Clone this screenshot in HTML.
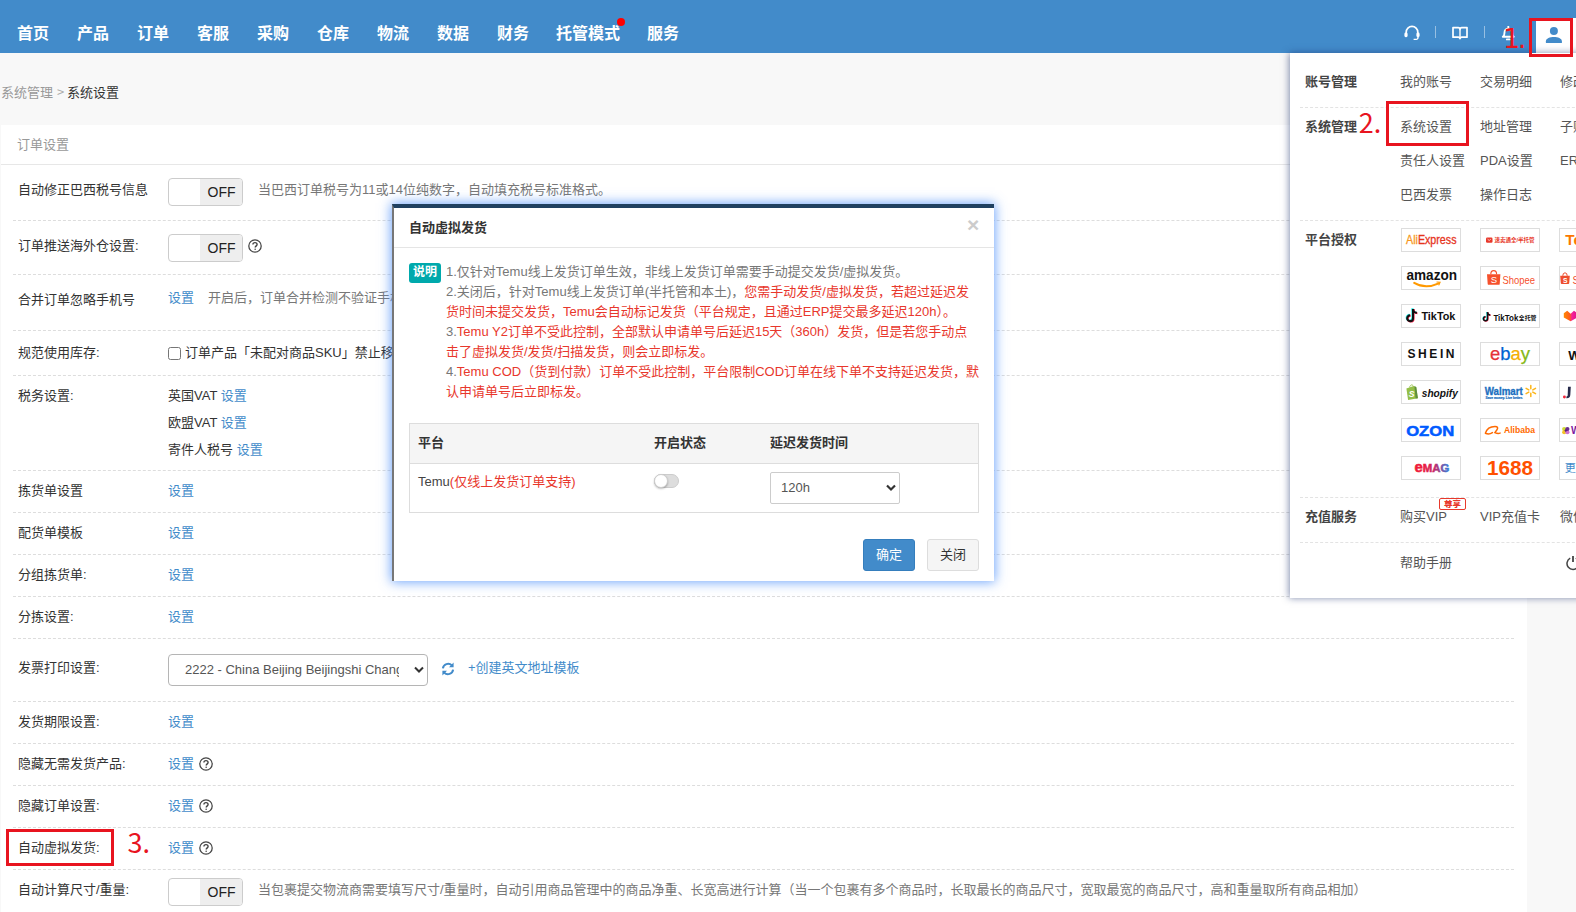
<!DOCTYPE html>
<html lang="zh-CN">
<head>
<meta charset="utf-8">
<title>系统设置</title>
<style>
*{box-sizing:border-box;margin:0;padding:0}
html,body{width:1576px;height:912px;overflow:hidden}
body{position:relative;background:#f8f8f8;font-family:"Liberation Sans","Noto Sans CJK SC",sans-serif;font-size:13px;color:#333}
.t{position:absolute;white-space:nowrap;line-height:20px;height:20px}
a{color:#428bca;text-decoration:none}
/* nav */
#nav{position:absolute;left:0;top:0;width:1576px;height:53px;background:#428bca}
#nav .m{position:absolute;top:22px;line-height:24px;height:24px;font-size:16px;font-weight:bold;color:#fff;white-space:nowrap}
/* panel */
#panel{position:absolute;left:1px;top:125px;width:1526px;height:800px;background:#fff}
#panel .hd{position:absolute;left:0;top:0;width:1525px;height:40px;border-bottom:1px solid #e7e7e7}
.sep{position:absolute;left:13px;width:1501px;height:0;border-top:1px dashed #ddd}
.lab{color:#333}
.gray{color:#777}
.tog{position:absolute;left:168px;width:75px;height:28px;border:1px solid #ccc;border-radius:4px;background:#fff;overflow:hidden}
.tog i{position:absolute;left:31px;top:0;width:43px;height:26px;background:#eee;font-style:normal;font-size:14px;line-height:27px;text-align:center;color:#222}
.q{position:absolute;width:14px;height:14px}


.rb{position:absolute;border:3px solid #e8141f}
.num{position:absolute;color:#e8141f;font-family:"Noto Sans CJK SC","Liberation Sans",sans-serif;font-size:27px;line-height:30px;height:30px;white-space:nowrap}
/* dropdown */
#dd{position:absolute;left:1290px;top:53px;width:300px;height:545px;background:#fff;box-shadow:-1px 0 7px rgba(30,50,110,.55)}
#dd .t{color:#555}
#dd .b{font-weight:bold;color:#444}
#dd .ds{position:absolute;left:10px;width:290px;height:0;border-top:1px dashed #e3e3e3}
.lg{position:absolute;width:60px;height:24px;border:1px solid #ddd;background:#fff;overflow:hidden}
.lg svg{position:absolute;left:-1px;top:-1px;width:60px;height:24px;overflow:visible}
.lg text{font-family:"Liberation Sans","Noto Sans CJK SC",sans-serif}
/* modal */
#modal{position:absolute;left:392px;top:204px;width:602px;height:377px;background:#fff;border-left:2px solid #777;border-top:4px solid #1f4060;box-shadow:0 0 11px 1px rgba(70,140,250,.78)}
#modal .t{color:#777}
#modal .r{color:#e8372c}
#modal .th{font-weight:bold;color:#333}
.btn{position:absolute;top:335px;width:52px;height:32px;border-radius:3px;font-size:13px;line-height:30px;text-align:center}

</style>
</head>
<body>
<!-- NAV -->
<div id="nav">
  <span class="m" style="left:17px">首页</span>
  <span class="m" style="left:77px">产品</span>
  <span class="m" style="left:137px">订单</span>
  <span class="m" style="left:197px">客服</span>
  <span class="m" style="left:257px">采购</span>
  <span class="m" style="left:317px">仓库</span>
  <span class="m" style="left:377px">物流</span>
  <span class="m" style="left:437px">数据</span>
  <span class="m" style="left:497px">财务</span>
  <span class="m" style="left:556px">托管模式</span>
  <span style="position:absolute;left:617px;top:18px;width:8px;height:8px;border-radius:50%;background:#f00"></span>
  <span class="m" style="left:647px">服务</span>

  <svg style="position:absolute;left:1403px;top:25px" width="18" height="16" viewBox="0 0 18 16"><path d="M3.2 9V7.2a5.8 5.8 0 0 1 11.6 0V9" fill="none" stroke="#fff" stroke-width="1.7"/><rect x="1.4" y="7.6" width="3.2" height="4.6" rx="1.4" fill="#fff"/><rect x="13.4" y="7.6" width="3.2" height="4.6" rx="1.4" fill="#fff"/><path d="M15 12v.6a1.8 1.8 0 0 1-1.8 1.8H10.6" fill="none" stroke="#fff" stroke-width="1.4"/></svg>
  <span style="position:absolute;left:1435px;top:26px;width:1px;height:12px;background:rgba(255,255,255,.45)"></span>
  <svg style="position:absolute;left:1452px;top:26px" width="16" height="15" viewBox="0 0 16 15"><path d="M1 1.6h5.2a1.8 1.8 0 0 1 1.8 1.8 1.8 1.8 0 0 1 1.8-1.8H15v9.6H9.8a1.8 1.8 0 0 0-1.8 1.4 1.8 1.8 0 0 0-1.8-1.4H1z" fill="none" stroke="#fff" stroke-width="1.7" stroke-linejoin="round"/><path d="M8 3.4v8.4" stroke="#fff" stroke-width="1.4"/></svg>
  <span style="position:absolute;left:1484px;top:26px;width:1px;height:12px;background:rgba(255,255,255,.45)"></span>
  <svg style="position:absolute;left:1501px;top:26px" width="15" height="16" viewBox="0 0 15 16"><path d="M1.8 10.8c1.5-1 1.7-2.2 1.7-4.4a3.8 3.8 0 0 1 7.6 0c0 2.2.2 3.4 1.7 4.400z" fill="none" stroke="#fff" stroke-width="1.9" stroke-linejoin="round"/><path d="M7.3 .6v1.4" stroke="#fff" stroke-width="1.8" stroke-linecap="round"/><path d="M5.8 13.4h3" stroke="#fff" stroke-width="1.7" stroke-linecap="round"/></svg>
  <div style="position:absolute;left:1536px;top:18px;width:40px;height:35px;background:#fff"></div>
  <svg style="position:absolute;left:1545px;top:25px" width="18" height="19" viewBox="0 0 18 19"><circle cx="8.9" cy="6" r="4" fill="#428bca"/><path d="M.9 17.9v-1.7C.9 13.4 5 12 8.9 12s8 1.4 8 4.2v1.7z" fill="#428bca"/></svg>
</div>

<!-- BREADCRUMB -->
<div class="t" style="left:1px;top:82px"><span style="color:#999">系统管理</span><span style="color:#aaa;font-family:'Noto Sans CJK SC',sans-serif;margin-left:1px"> &gt; </span><span>系统设置</span></div>

<!-- PANEL -->
<div id="panel">
  <div class="hd"><span class="t" style="left:16px;top:10px;color:#999">订单设置</span></div>
</div>

<!-- PANEL CONTENT (page coords) -->
<div id="rows">
<span class="t lab" style="left:18px;top:180px">自动修正巴西税号信息</span>
<div class="tog" style="top:178px"><i>OFF</i></div>
<span class="t gray" style="left:258px;top:180px">当巴西订单税号为11或14位纯数字，自动填充税号标准格式。</span>
<div class="sep" style="top:220px"></div>
<span class="t lab" style="left:18px;top:236px">订单推送海外仓设置:</span>
<div class="tog" style="top:234px"><i>OFF</i></div>
<svg class="q" style="left:248px;top:239px" viewBox="0 0 14 14"><circle cx="7" cy="7" r="6.2" fill="none" stroke="#444" stroke-width="1.25"/><path d="M4.9 5.6c0-1.2.9-2 2.1-2s2.1.8 2.1 1.9c0 1.3-1.9 1.5-1.9 3.1" fill="none" stroke="#444" stroke-width="1.35"/><circle cx="7.15" cy="10.3" r=".8" fill="#444"/></svg>
<div class="sep" style="top:274px"></div>
<span class="t lab" style="left:18px;top:290px">合并订单忽略手机号</span>
<span class="t " style="left:168px;top:288px"><a>设置</a></span>
<span class="t gray" style="left:208px;top:288px">开启后，订单合并检测不验证手机号</span>
<div class="sep" style="top:330px"></div>
<span class="t lab" style="left:18px;top:343px">规范使用库存:</span>
<span style="position:absolute;left:168px;top:347px;width:13px;height:13px;border:1px solid #767676;border-radius:2.5px;background:#fff"></span>
<span class="t " style="left:185px;top:343px">订单产品「未配对商品SKU」禁止移入待处理</span>
<div class="sep" style="top:375px"></div>
<span class="t lab" style="left:18px;top:386px">税务设置:</span>
<span class="t " style="left:168px;top:386px">英国VAT <a>设置</a></span>
<span class="t " style="left:168px;top:413px">欧盟VAT <a>设置</a></span>
<span class="t " style="left:168px;top:440px">寄件人税号 <a>设置</a></span>
<div class="sep" style="top:470px"></div>
<span class="t lab" style="left:18px;top:481px">拣货单设置</span>
<span class="t " style="left:168px;top:481px"><a>设置</a></span>
<div class="sep" style="top:512px"></div>
<span class="t lab" style="left:18px;top:523px">配货单模板</span>
<span class="t " style="left:168px;top:523px"><a>设置</a></span>
<div class="sep" style="top:554px"></div>
<span class="t lab" style="left:18px;top:565px">分组拣货单:</span>
<span class="t " style="left:168px;top:565px"><a>设置</a></span>
<div class="sep" style="top:596px"></div>
<span class="t lab" style="left:18px;top:607px">分拣设置:</span>
<span class="t " style="left:168px;top:607px"><a>设置</a></span>
<div class="sep" style="top:638px"></div>
<span class="t lab" style="left:18px;top:658px">发票打印设置:</span>
<div style="position:absolute;left:168px;top:654px;width:260px;height:32px;border:1px solid #b5b5b5;border-radius:4px;background:#fff;overflow:hidden"><span class="t" style="left:16px;top:5px;font-size:13px;color:#555;width:214px;overflow:hidden">2222 - China Beijing Beijingshi Changping</span><svg style="position:absolute;right:2px;top:10px" width="12" height="10" viewBox="0 0 12 10"><path d="M2 2.5l4 4 4-4" fill="none" stroke="#333" stroke-width="2"/></svg></div>
<svg style="position:absolute;left:441px;top:662px" width="14" height="14" viewBox="0 0 14 14"><path d="M1.9 6.4A5.2 5.2 0 0 1 10.8 3.4M12.1 7.6A5.2 5.2 0 0 1 3.2 10.6" fill="none" stroke="#428bca" stroke-width="2"/><path d="M12.6 .6v4.6H8zM1.4 13.4V8.8H6z" fill="#428bca"/></svg>
<span class="t " style="left:468px;top:658px"><a>+创建英文地址模板</a></span>
<div class="sep" style="top:701px"></div>
<span class="t lab" style="left:18px;top:712px">发货期限设置:</span>
<span class="t " style="left:168px;top:712px"><a>设置</a></span>
<div class="sep" style="top:743px"></div>
<span class="t lab" style="left:18px;top:754px">隐藏无需发货产品:</span>
<span class="t " style="left:168px;top:754px"><a>设置</a></span>
<svg class="q" style="left:199px;top:757px" viewBox="0 0 14 14"><circle cx="7" cy="7" r="6.2" fill="none" stroke="#444" stroke-width="1.25"/><path d="M4.9 5.6c0-1.2.9-2 2.1-2s2.1.8 2.1 1.9c0 1.3-1.9 1.5-1.9 3.1" fill="none" stroke="#444" stroke-width="1.35"/><circle cx="7.15" cy="10.3" r=".8" fill="#444"/></svg>
<div class="sep" style="top:785px"></div>
<span class="t lab" style="left:18px;top:796px">隐藏订单设置:</span>
<span class="t " style="left:168px;top:796px"><a>设置</a></span>
<svg class="q" style="left:199px;top:799px" viewBox="0 0 14 14"><circle cx="7" cy="7" r="6.2" fill="none" stroke="#444" stroke-width="1.25"/><path d="M4.9 5.6c0-1.2.9-2 2.1-2s2.1.8 2.1 1.9c0 1.3-1.9 1.5-1.9 3.1" fill="none" stroke="#444" stroke-width="1.35"/><circle cx="7.15" cy="10.3" r=".8" fill="#444"/></svg>
<div class="sep" style="top:827px"></div>
<span class="t lab" style="left:18px;top:838px">自动虚拟发货:</span>
<span class="t " style="left:168px;top:838px"><a>设置</a></span>
<svg class="q" style="left:199px;top:841px" viewBox="0 0 14 14"><circle cx="7" cy="7" r="6.2" fill="none" stroke="#444" stroke-width="1.25"/><path d="M4.9 5.6c0-1.2.9-2 2.1-2s2.1.8 2.1 1.9c0 1.3-1.9 1.5-1.9 3.1" fill="none" stroke="#444" stroke-width="1.35"/><circle cx="7.15" cy="10.3" r=".8" fill="#444"/></svg>
<div class="sep" style="top:869px"></div>
<span class="t lab" style="left:18px;top:880px">自动计算尺寸/重量:</span>
<div class="tog" style="top:878px"><i>OFF</i></div>
<span class="t gray" style="left:258px;top:880px">当包裹提交物流商需要填写尺寸/重量时，自动引用商品管理中的商品净重、长宽高进行计算（当一个包裹有多个商品时，长取最长的商品尺寸，宽取最宽的商品尺寸，高和重量取所有商品相加）</span>
</div>

<!-- MODAL -->
<div id="modal">
<span class="t" style="left:15px;top:10px;font-weight:bold;color:#333">自动虚拟发货</span>
<span class="t" style="left:573px;top:7px;font-size:21px;font-weight:bold;color:#ccc;font-family:'Liberation Sans',sans-serif">×</span>
<div style="position:absolute;left:0;top:39px;width:600px;height:1px;background:#e5e5e5"></div>
<span style="position:absolute;left:15px;top:55px;width:32px;height:20px;border-radius:3px;background:#00a9ac;color:#fff;font-size:12px;font-weight:bold;line-height:19px;text-align:center">说明</span>
<span class="t" style="left:52px;top:54px">1.仅针对Temu线上发货订单生效，非线上发货订单需要手动提交发货/虚拟发货。</span>
<span class="t" style="left:52px;top:74px">2.关闭后，针对Temu线上发货订单(半托管和本土)，<span class="r">您需手动发货/虚拟发货，若超过延迟发</span></span>
<span class="t" style="left:52px;top:94px"><span class="r">货时间未提交发货，Temu会自动标记发货（平台规定，且通过ERP提交最多延迟120h）。</span></span>
<span class="t" style="left:52px;top:114px">3.<span class="r">Temu Y2订单不受此控制，全部默认申请单号后延迟15天（360h）发货，但是若您手动点</span></span>
<span class="t" style="left:52px;top:134px"><span class="r">击了虚拟发货/发货/扫描发货，则会立即标发。</span></span>
<span class="t" style="left:52px;top:154px">4.<span class="r">Temu COD（货到付款）订单不受此控制，平台限制COD订单在线下单不支持延迟发货，默</span></span>
<span class="t" style="left:52px;top:174px"><span class="r">认申请单号后立即标发。</span></span>
<div style="position:absolute;left:15px;top:215px;width:570px;height:90px;border:1px solid #ddd"><div style="height:40px;background:#f5f5f5;border-bottom:1px solid #ddd"></div></div>
<span class="t th" style="left:24px;top:225px">平台</span>
<span class="t th" style="left:260px;top:225px">开启状态</span>
<span class="t th" style="left:376px;top:225px">延迟发货时间</span>
<span class="t" style="left:24px;top:264px;color:#444">Temu<span class="r">(仅线上发货订单支持)</span></span>
<span style="position:absolute;left:260px;top:266px;width:25px;height:14px;border-radius:7px;background:#ddd;border:1px solid #ccc"><i style="position:absolute;left:-1px;top:-1px;width:14px;height:14px;border-radius:50%;background:#fff;border:1px solid #ccc;box-shadow:0 1px 2px rgba(0,0,0,.25)"></i></span>
<div style="position:absolute;left:376px;top:264px;width:130px;height:32px;border:1px solid #ccc;border-radius:2px;background:#fff"><span class="t" style="left:10px;top:5px;font-size:13px;color:#555">120h</span><svg style="position:absolute;right:2px;top:10px" width="12" height="10" viewBox="0 0 12 10"><path d="M2 2.5l4 4 4-4" fill="none" stroke="#333" stroke-width="2.2"/></svg></div>
<div class="btn" style="left:469px;top:331px;background:#428bca;border:1px solid #357ebd;color:#fff">确定</div>
<div class="btn" style="left:533px;top:331px;background:#f5f5f5;border:1px solid #ddd;color:#333">关闭</div>
</div>

<!-- DROPDOWN -->
<div id="dd">
<span class="t b" style="left:15px;top:19px">账号管理</span>
<span class="t " style="left:110px;top:19px">我的账号</span>
<span class="t " style="left:190px;top:19px">交易明细</span>
<span class="t " style="left:270px;top:19px">修改密码</span>
<div class="ds" style="top:54px"></div>
<span class="t b" style="left:15px;top:64px">系统管理</span>
<span class="t " style="left:110px;top:64px">系统设置</span>
<span class="t " style="left:190px;top:64px">地址管理</span>
<span class="t " style="left:270px;top:64px">子账号管理</span>
<span class="t " style="left:110px;top:98px">责任人设置</span>
<span class="t " style="left:190px;top:98px">PDA设置</span>
<span class="t " style="left:270px;top:98px">ERP对接</span>
<span class="t " style="left:110px;top:132px">巴西发票</span>
<span class="t " style="left:190px;top:132px">操作日志</span>
<div class="ds" style="top:167px"></div>
<span class="t b" style="left:15px;top:177px">平台授权</span>
<div class="lg" style="left:111px;top:175px"><svg viewBox="0 0 60 24"><text x="5" y="16.3" font-size="13" textLength="50.5" lengthAdjust="spacingAndGlyphs"><tspan fill="#f7971d" stroke="#f7971d" stroke-width=".3">Ali</tspan><tspan fill="#e6341c" stroke="#e6341c" stroke-width=".3">Express</tspan></text></svg></div>
<div class="lg" style="left:190px;top:175px"><svg viewBox="0 0 60 24"><rect x="6" y="9.5" width="6.5" height="5.2" rx="1.2" fill="#e8392c"/><path d="M7.6 11.2l1.6 1.3 1.6-1.3" stroke="#fff" stroke-width=".7" fill="none"/><text x="14.5" y="14.2" font-size="5.6" font-weight="bold" fill="#e8392c" textLength="40" lengthAdjust="spacingAndGlyphs">速卖通全/半托管</text></svg></div>
<div class="lg" style="left:269px;top:175px"><svg viewBox="0 0 60 24"><text x="6.3" y="17.3" font-size="15.2" font-weight="bold" fill="#fb7701">Temu</text></svg></div>
<div class="lg" style="left:111px;top:213px"><svg viewBox="0 0 60 24"><text x="5.5" y="14" font-size="15" font-weight="bold" fill="#111" textLength="50.5" lengthAdjust="spacingAndGlyphs">amazon</text><path d="M13.2 16.9c7 4.2 16.4 4.2 24.6.5" stroke="#f90" stroke-width="2" fill="none" stroke-linecap="round"/><path d="M35.5 16l3.6.2-1.4 3.2" stroke="#f90" stroke-width="1.1" fill="none"/></svg></div>
<div class="lg" style="left:190px;top:213px"><svg viewBox="0 0 60 24"><path d="M7 8.2h13.4l-.7 9.7a1 1 0 0 1-1 .9H8.7a1 1 0 0 1-1-.9z" fill="#f6512c"/><path d="M10.8 8.2a2.9 3.6 0 0 1 5.8 0" stroke="#f6512c" stroke-width="1.1" fill="none"/><text x="10.7" y="17.2" font-size="9.5" fill="#fff">S</text><text x="22.5" y="18.4" font-size="11.4" fill="#f6512c" textLength="32.5" lengthAdjust="spacingAndGlyphs">Shopee</text></svg></div>
<div class="lg" style="left:269px;top:213px"><svg viewBox="0 0 60 24"><path d="M1.2 9.8h9.6l-.6 7.4a.9.9 0 0 1-.9.8H2.7a.9.9 0 0 1-.9-.8z" fill="#ee4d2d"/><path d="M3.8 9.8a2.2 3 0 0 1 4.4 0" stroke="#ee4d2d" stroke-width="1" fill="none"/><text x="4" y="16.6" font-size="6.8" font-weight="bold" fill="#fff">S</text><text x="13.5" y="17.5" font-size="10" fill="#ee4d2d">Shopee</text></svg></div>
<div class="lg" style="left:111px;top:251px"><svg viewBox="0 0 60 24"><g transform="translate(4.45 4.45) scale(1.00)"><path d="M7 0v9.3a2.9 2.9 0 1 1-2.9-2.9" fill="none" stroke="#25f4ee" stroke-width="2.1"/><path d="M7 0a3.9 3.9 0 0 0 3.9 3.9" fill="none" stroke="#25f4ee" stroke-width="2.1"/></g><g transform="translate(5.55 5.35) scale(1.00)"><path d="M7 0v9.3a2.9 2.9 0 1 1-2.9-2.9" fill="none" stroke="#fe2c55" stroke-width="2.1"/><path d="M7 0a3.9 3.9 0 0 0 3.9 3.9" fill="none" stroke="#fe2c55" stroke-width="2.1"/></g><g transform="translate(5.00 4.90) scale(1.00)"><path d="M7 0v9.3a2.9 2.9 0 1 1-2.9-2.9" fill="none" stroke="#111" stroke-width="2.1"/><path d="M7 0a3.9 3.9 0 0 0 3.9 3.9" fill="none" stroke="#111" stroke-width="2.1"/></g><text x="20.4" y="16.2" font-size="11.6" font-weight="bold" fill="#111" textLength="34" lengthAdjust="spacingAndGlyphs">TikTok</text></svg></div>
<div class="lg" style="left:190px;top:251px"><svg viewBox="0 0 60 24"><g transform="translate(2.21 7.88) scale(0.70)"><path d="M7 0v9.3a2.9 2.9 0 1 1-2.9-2.9" fill="none" stroke="#25f4ee" stroke-width="2.1"/><path d="M7 0a3.9 3.9 0 0 0 3.9 3.9" fill="none" stroke="#25f4ee" stroke-width="2.1"/></g><g transform="translate(2.99 8.51) scale(0.70)"><path d="M7 0v9.3a2.9 2.9 0 1 1-2.9-2.9" fill="none" stroke="#fe2c55" stroke-width="2.1"/><path d="M7 0a3.9 3.9 0 0 0 3.9 3.9" fill="none" stroke="#fe2c55" stroke-width="2.1"/></g><g transform="translate(2.60 8.20) scale(0.70)"><path d="M7 0v9.3a2.9 2.9 0 1 1-2.9-2.9" fill="none" stroke="#111" stroke-width="2.1"/><path d="M7 0a3.9 3.9 0 0 0 3.9 3.9" fill="none" stroke="#111" stroke-width="2.1"/></g><text x="13.4" y="16.8" font-size="8.4" font-weight="bold" fill="#111" textLength="25" lengthAdjust="spacingAndGlyphs">TikTok</text><text x="38.8" y="16.3" font-size="6.2" font-weight="bold" fill="#111" textLength="17.5" lengthAdjust="spacingAndGlyphs">全托管</text></svg></div>
<div class="lg" style="left:269px;top:251px"><svg viewBox="0 0 60 24"><defs><linearGradient id="lz" x1="0" x2="1"><stop offset="0" stop-color="#ff8a00"/><stop offset=".45" stop-color="#ff5a1f"/><stop offset=".6" stop-color="#f5229a"/><stop offset="1" stop-color="#e0108a"/></linearGradient></defs><path d="M4.8 9.3l3.4-2.5 3.4 2.9 3.4-2.9 3.4 2.5v4.3l-6.800 3.700-6.800-3.700z" fill="url(#lz)"/><text x="22" y="16" font-size="9" font-weight="bold" fill="#0f146d">Lazada</text></svg></div>
<div class="lg" style="left:111px;top:289px"><svg viewBox="0 0 60 24"><text x="6.5" y="16.2" font-size="12" font-weight="bold" fill="#111" textLength="47" lengthAdjust="spacing">SHEIN</text></svg></div>
<div class="lg" style="left:190px;top:289px"><svg viewBox="0 0 60 24"><text x="10" y="17.6" font-size="18.5" textLength="40" lengthAdjust="spacingAndGlyphs" stroke-width=".25"><tspan fill="#e53238" stroke="#e53238">e</tspan><tspan fill="#0064d2" stroke="#0064d2">b</tspan><tspan fill="#f5af02" stroke="#f5af02">a</tspan><tspan fill="#86b817" stroke="#86b817">y</tspan></text></svg></div>
<div class="lg" style="left:269px;top:289px"><svg viewBox="0 0 60 24"><text x="9.2" y="17.8" font-size="13" font-weight="bold" fill="#111">Wish</text></svg></div>
<div class="lg" style="left:111px;top:327px"><svg viewBox="0 0 60 24"><path d="M5.4 8.400l7.200-2.400 2.600.900 1.700 11.300-9.800 1.700z" fill="#95bf47"/><path d="M13.4 6.300l1.800.600 1.700 11.300-2.300.400z" fill="#5e8e3e"/><path d="M8.600 7.400c.2-2.200 2.900-3.800 3.700-1" stroke="#95bf47" stroke-width=".9" fill="none"/><text x="7.800" y="16.800" font-size="8.6" font-weight="bold" font-style="italic" fill="#fff">S</text><text x="20.8" y="16.6" font-size="11.2" font-weight="bold" font-style="italic" fill="#111" textLength="36" lengthAdjust="spacingAndGlyphs">shopify</text></svg></div>
<div class="lg" style="left:190px;top:327px"><svg viewBox="0 0 60 24"><text x="4.8" y="14.5" font-size="10" font-weight="bold" fill="#1b6fc0" stroke="#1b6fc0" stroke-width=".3" textLength="38" lengthAdjust="spacingAndGlyphs">Walmart</text><text x="5.6" y="18.6" font-size="2.9" font-weight="bold" fill="#1b6fc0" stroke="#1b6fc0" stroke-width=".2" textLength="37" lengthAdjust="spacingAndGlyphs">Save money. Live better.</text><g stroke="#fcb61a" stroke-width="1.5" stroke-linecap="round"><path d="M50.8 5.6v3.1M50.8 13.3v3.1M46.1 8.3l2.7 1.6M52.8 12.1l2.7 1.6M46.1 13.7l2.7-1.6M52.8 9.9l2.7-1.6"/></g></svg></div>
<div class="lg" style="left:269px;top:327px"><svg viewBox="0 0 60 24"><path d="M9 6.800h2.800l-.5 8.200c-.2 2.400-1.700 3.500-3.900 3.300l.1-1.900c.9 0 1.200-.5 1.200-1.400z" fill="#262a4a"/><circle cx="5.400" cy="17" r="1.450" fill="#f0283c"/><text x="19" y="17" font-size="10" font-weight="bold" fill="#1e2a54">umia</text></svg></div>
<div class="lg" style="left:111px;top:365px"><svg viewBox="0 0 60 24"><text x="5.200" y="17.600" font-size="14" font-weight="bold" fill="#005bff" stroke="#005bff" stroke-width=".5" textLength="48" lengthAdjust="spacingAndGlyphs">OZON</text></svg></div>
<div class="lg" style="left:190px;top:365px"><svg viewBox="0 0 60 24"><path d="M5.4 15.2c1.2-4 4.6-6.8 9.6-6.8 2.6 0 3.4 1.4 1.8 3.6l-1.9 2.6c2.1 1 3.9 1.1 5.2.5M5.4 15.2c2.2 1 5.2.6 7-.6" stroke="#ff6a00" stroke-width="1.5" fill="none" stroke-linecap="round"/><text x="24" y="15.2" font-size="9" font-weight="bold" fill="#ff6a00" textLength="31" lengthAdjust="spacingAndGlyphs">Alibaba</text></svg></div>
<div class="lg" style="left:269px;top:365px"><svg viewBox="0 0 60 24"><g transform="translate(6.800 12.600)"><circle cx="-1.6" cy="-1.6" r="2.100" fill="#cfd936"/><circle cx="-1.6" cy="1.6" r="2.100" fill="#f3c326"/><circle cx="1.6" cy="1.6" r="2.100" fill="#cf73d3"/><circle cx="1.600" cy="-1.600" r="2.100" fill="#6a2c91"/><path d="M0-1.500l1.500 1.500L0 1.500-1.500 0z" fill="#5a2182"/></g><text x="12" y="16.2" font-size="10" font-weight="bold" fill="#7b189f">Wayfair</text></svg></div>
<div class="lg" style="left:111px;top:403px"><svg viewBox="0 0 60 24"><defs><linearGradient id="em" x1="0" x2="1"><stop offset="0" stop-color="#ef1c3c"/><stop offset=".45" stop-color="#c22a6c"/><stop offset="1" stop-color="#2f7fe0"/></linearGradient></defs><text x="13.5" y="16" font-size="15" font-weight="bold" fill="#ef1c3c" stroke="#ef1c3c" stroke-width=".5">e</text><text x="21.8" y="16" font-size="10.8" font-weight="bold" fill="url(#em)" textLength="26.5" lengthAdjust="spacingAndGlyphs" stroke="url(#em)" stroke-width=".5">MAG</text></svg></div>
<div class="lg" style="left:190px;top:403px"><svg viewBox="0 0 60 24"><text x="7" y="19" font-size="20" font-weight="bold" fill="#ff5000" textLength="46" lengthAdjust="spacingAndGlyphs">1688</text></svg></div>
<div class="lg" style="left:269px;top:403px"><svg viewBox="0 0 60 24"><text x="5.8" y="16" font-size="11" fill="#428bca">更多</text></svg></div>
<div class="ds" style="top:444px"></div>
<span class="t b" style="left:15px;top:454px">充值服务</span>
<span class="t " style="left:110px;top:454px">购买VIP</span>
<span class="t " style="left:190px;top:454px">VIP充值卡</span>
<span class="t " style="left:270px;top:454px">微信充值</span>
<span style="position:absolute;left:149px;top:445px;width:27px;height:12px;border:1px solid #e8392c;border-radius:2px;color:#e8392c;font-size:8.5px;font-weight:900;line-height:10px;text-align:center;letter-spacing:0">尊享</span>
<div class="ds" style="top:489px"></div>
<span class="t " style="left:110px;top:500px">帮助手册</span>
<svg style="position:absolute;left:275px;top:502px" width="16" height="16" viewBox="0 0 16 16"><path d="M5.2 3.2A6 6 0 1 0 10.8 3.2" fill="none" stroke="#444" stroke-width="1.5"/><path d="M8 1v6" stroke="#444" stroke-width="1.8"/></svg>
</div>

<!-- ANNOTATIONS -->
<div id="ann">
<div class="rb" style="left:1529px;top:18px;width:44px;height:39px"></div>
<div class="rb" style="left:1386px;top:101px;width:83px;height:45px"></div>
<div class="rb" style="left:6px;top:829px;width:108px;height:37px"></div>
<svg style="position:absolute;left:0;top:0;pointer-events:none" width="1576" height="912" viewBox="0 0 1576 912">
<text x="1503" y="47.8" font-family="'DejaVu Sans','Noto Sans CJK SC',sans-serif" font-size="27" fill="#e8141f" letter-spacing="-2.4">1.</text>
<text x="1358.8" y="132.8" font-family="'Noto Sans CJK SC','Liberation Sans',sans-serif" font-size="27" fill="#e8141f">2.</text>
<text x="127.6" y="852.8" font-family="'Noto Sans CJK SC','Liberation Sans',sans-serif" font-size="27" fill="#e8141f">3.</text>
</svg>
</div>
</body>
</html>
